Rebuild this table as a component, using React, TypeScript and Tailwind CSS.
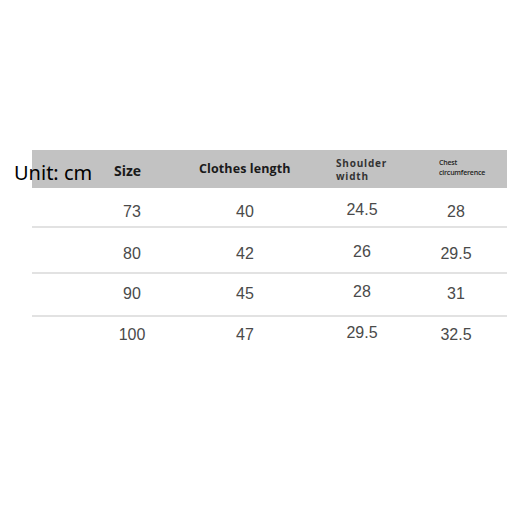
import React from "react";

const rows = [
  { h: "h-[38px]", pt: "pt-[12px]", v: ["73", "40", "24.5", "28"] },
  { h: "h-[44px]", pt: "pt-[14px]", v: ["80", "42", "26", "29.5"] },
  { h: "h-[41px]", pt: "pt-[8px]", v: ["90", "45", "28", "31"] },
  { h: "h-[40px]", pt: "pt-[6px]", v: ["100", "47", "29.5", "32.5"] },
];

export default function App() {
  return (
    <div className="w-[507px] h-[507px] bg-white relative overflow-hidden">
      <div className="pt-[150px] pl-[32px]">
        <div className="grid grid-cols-[50px_100px_126px_108px_80px_1fr] h-[38px] bg-[#c2c2c2] items-center font-['Open_Sans',sans-serif] font-bold text-[#1a1a1a]">
          <div />
          <div className="text-[14px] pl-[32px] pt-[2px]">Size</div>
          <div className="text-[12.5px] tracking-[0.1px] pl-[17px] pt-[0px]">Clothes length</div>
          <div className="text-[10px] tracking-[0.8px] leading-[13px] pl-[28px] mt-[2px] text-[#333]">
            Shoulder
            <br />
            width
          </div>
          <div className="text-[7px] leading-[10px] font-semibold tracking-[-0.2px] pl-[23px] mt-[-2px] text-[#222]">
            Chest
            <br />
            circumference
          </div>
          <div />
        </div>
        {rows.map((r, i) => (
          <div key={i}>
            <div
              className={`grid grid-cols-[50px_100px_126px_108px_80px_1fr] ${r.h} ${r.pt} font-['Liberation_Sans',Arial,sans-serif] text-[16px] text-[#4a4a4a]`}
            >
              <div />
              <div className="text-center">{r.v[0]}</div>
              <div className="text-center">{r.v[1]}</div>
              <div className="text-center mt-[-2px]">{r.v[2]}</div>
              <div className="text-center">{r.v[3]}</div>
              <div />
            </div>
            {i < 3 && <div className="h-[2px] bg-[#e2e2e2]" />}
          </div>
        ))}
      </div>
      <div className="absolute left-[14px] top-[161px] font-['Noto_Sans',sans-serif] text-[20px] leading-[24px] text-black">
        Unit: cm
      </div>
    </div>
  );
}
